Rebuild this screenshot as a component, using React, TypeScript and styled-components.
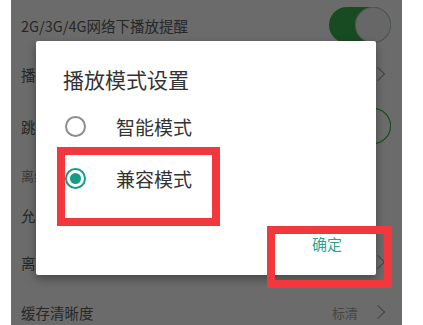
import styled, { createGlobalStyle } from "styled-components";

const GlobalStyle = createGlobalStyle`
    html, body {
        margin: 0;
        padding: 0;
        background: #fff;
    }
    body {
        font-family: "Noto Sans CJK SC", "Noto Sans", sans-serif;
    }
`;

const settings = [
    { label: "2G/3G/4G网络下播放提醒", height: 50, kind: "toggle" },
    { label: "播放模式", height: 48, kind: "arrow" },
    { label: "跳过片头片尾", height: 56, kind: "toggle", ring: true },
    { label: "离线缓存", height: 38, kind: "header" },
    { label: "允许2G/3G/4G网络下缓存", height: 46, kind: "none" },
    { label: "离线缓存位置", height: 48, kind: "arrow" },
    { label: "缓存清晰度", height: 52, kind: "arrow", value: "标清" },
];

const App = () => {
    return (
        <Page>
            <GlobalStyle />
            <Screen>
                <List>
                    {settings.map((s) =>
                        s.kind === "header" ? (
                            <Header key={s.label} $h={s.height}>
                                {s.label}
                            </Header>
                        ) : (
                            <Row key={s.label} $h={s.height}>
                                <span>{s.label}</span>
                                <Right>
                                    {s.value && <Value>{s.value}</Value>}
                                    {s.kind === "arrow" && <Chevron />}
                                    {s.kind === "toggle" && (
                                        <Toggle>
                                            <Thumb $ring={s.ring} />
                                        </Toggle>
                                    )}
                                </Right>
                            </Row>
                        )
                    )}
                </List>
                <Dim />
                <Dialog>
                    <Title>播放模式设置</Title>
                    <Options>
                        <Option>
                            <Radio />
                            <span>智能模式</span>
                        </Option>
                        <Option>
                            <Radio $checked />
                            <span>兼容模式</span>
                        </Option>
                    </Options>
                    <Footer>
                        <OkButton>确定</OkButton>
                    </Footer>
                </Dialog>
                {/* red annotation boxes drawn over the screenshot */}
                <Mark $x={46} $y={147} $w={163} $h={79} />
                <Mark $x={256} $y={226} $w={125} $h={62} />
            </Screen>
        </Page>
    );
};

export default App;

const Page = styled.div`
    width: 423px;
    height: 325px;
    overflow: hidden;
    background: #fff;
`;

const Screen = styled.div`
    position: relative;
    margin-left: 11px;
    width: 391px;
    height: 325px;
    overflow: hidden;
    background: #fff;
`;

const List = styled.div`
    display: flex;
    flex-direction: column;
`;

const Row = styled.div<{ $h: number }>`
    height: ${(p) => p.$h}px;
    flex-shrink: 0;
    display: flex;
    align-items: center;
    justify-content: space-between;
    padding: 0 0 0 10px;
    font-size: 14.5px;
    color: #5e5e5e;
`;

const Header = styled.div<{ $h: number }>`
    height: ${(p) => p.$h}px;
    flex-shrink: 0;
    display: flex;
    align-items: center;
    padding: 4px 0 0 10px;
    box-sizing: border-box;
    font-size: 13px;
    color: #8a8a8a;
`;

const Right = styled.div`
    display: flex;
    align-items: center;
    gap: 15px;
`;

const Value = styled.span`
    font-size: 13px;
    color: #a8a8a8;
`;

const Chevron = styled.span`
    width: 9px;
    height: 9px;
    margin-right: 19px;
    border-top: 1.5px solid #9a9a9a;
    border-right: 1.5px solid #9a9a9a;
    transform: rotate(45deg);
`;

const Toggle = styled.div`
    width: 62px;
    height: 36px;
    margin-right: 11px;
    border-radius: 18px;
    background: #3ab34f;
    display: flex;
    justify-content: flex-end;
`;

const Thumb = styled.div<{ $ring?: boolean }>`
    width: 34px;
    height: 34px;
    margin: 1px;
    border-radius: 50%;
    background: ${(p) => (p.$ring ? "#fff" : "#f6f6f6")};
    box-shadow: 0 0 0 1px ${(p) => (p.$ring ? "#3ab34f" : "#d0d0d0")};
`;

const Dim = styled.div`
    position: absolute;
    inset: 0;
    background: rgba(0, 0, 0, 0.58);
`;

const Dialog = styled.div`
    position: absolute;
    left: 25px;
    top: 41px;
    width: 340px;
    height: 234px;
    box-sizing: border-box;
    background: #fff;
    border-radius: 2px;
    box-shadow: 0 4px 10px rgba(0, 0, 0, 0.35);
    display: flex;
    flex-direction: column;
    padding: 22px 34px 0 27px;
`;

const Title = styled.div`
    font-size: 21px;
    line-height: 32px;
    color: #333;
`;

const Options = styled.div`
    display: flex;
    flex-direction: column;
    margin-top: 16px;
    gap: 22px;
`;

const Option = styled.div`
    display: flex;
    align-items: center;
    gap: 30px;
    height: 30px;
    padding-left: 2px;
    font-size: 19px;
    color: #333;
`;

const Radio = styled.span<{ $checked?: boolean }>`
    width: 21px;
    height: 21px;
    box-sizing: border-box;
    border-radius: 50%;
    border: 2px solid ${(p) => (p.$checked ? "#179c87" : "#8c8c8c")};
    display: flex;
    align-items: center;
    justify-content: center;

    &::after {
        content: "";
        display: ${(p) => (p.$checked ? "block" : "none")};
        width: 11px;
        height: 11px;
        border-radius: 50%;
        background: #179c87;
    }
`;

const Footer = styled.div`
    display: flex;
    justify-content: flex-end;
    margin-top: 40px;
`;

const OkButton = styled.button`
    border: none;
    background: none;
    padding: 0;
    font-family: inherit;
    font-size: 15px;
    color: #2ba591;
`;

const Mark = styled.div<{ $x: number; $y: number; $w: number; $h: number }>`
    position: absolute;
    left: ${(p) => p.$x}px;
    top: ${(p) => p.$y}px;
    width: ${(p) => p.$w}px;
    height: ${(p) => p.$h}px;
    box-sizing: border-box;
    border: 8px solid #f2383c;
`;
